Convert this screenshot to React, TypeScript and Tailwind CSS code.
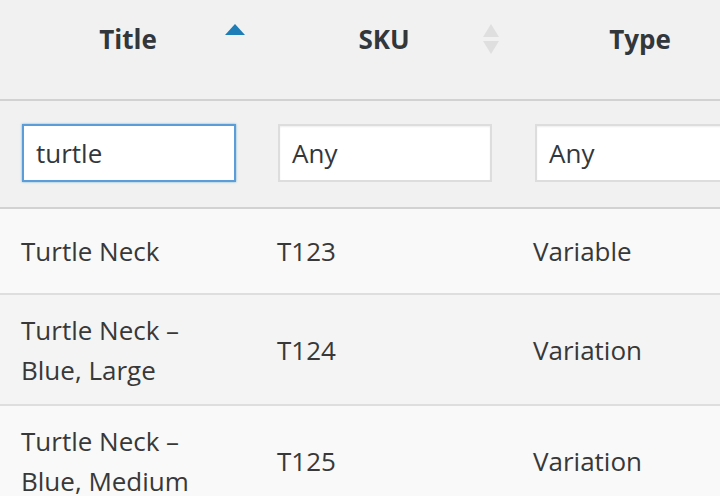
const rows = [
  { title: ["Turtle Neck"], sku: "T123", type: "Variable", h: "h-[86px]", bg: "bg-[#f9f9f9]" },
  { title: ["Turtle Neck –", "Blue, Large"], sku: "T124", type: "Variation", h: "h-[111px]", bg: "bg-[#f4f4f4]" },
  { title: ["Turtle Neck –", "Blue, Medium"], sku: "T125", type: "Variation", h: "h-[111px]", bg: "bg-[#f9f9f9]" },
];

function SortUp() {
  return (
    <svg width="20" height="12" viewBox="0 0 20 12" className="absolute right-[11px] top-[24px]">
      <path d="M10 0 L20 11 L0 11 Z" fill="#1e7cb6" />
    </svg>
  );
}

function SortBoth() {
  return (
    <svg width="16" height="31" viewBox="0 0 16 31" className="absolute right-[13px] top-[24px]">
      <path d="M8 0 L16 13 L0 13 Z" fill="#dfdfdf" />
      <path d="M0 17 L16 17 L8 30 Z" fill="#dfdfdf" />
    </svg>
  );
}

export default function App() {
  return (
    <div
      className="h-[496px] w-[720px] overflow-hidden bg-[#f1f1f1] text-[26px] text-[#383838]"
      style={{ fontFamily: '"Open Sans", "Noto Sans", sans-serif' }}
    >
      <div className="w-[768px]">
        <div className="grid h-[101px] grid-cols-[256px_256px_256px] border-b-2 border-[#d2d2d2] bg-[#f1f1f1] font-bold text-[#32373c]">
          <div className="relative flex items-center justify-center pb-[20px]">
            Title
            <SortUp />
          </div>
          <div className="relative flex items-center justify-center pb-[20px]">
            SKU
            <SortBoth />
          </div>
          <div className="relative flex items-center justify-center pb-[20px]">Type</div>
        </div>

        <div className="grid h-[108px] grid-cols-[256px_256px_256px] border-b-2 border-[#d2d2d2] bg-[#f1f1f1]">
          <div className="flex items-center pb-[2px] pl-[22px]">
            <div className="flex h-[58px] w-[214px] items-center border-2 border-[#5b9dd9] bg-white px-[12px] text-[#32373c] shadow-[0_0_2px_rgba(30,140,190,0.6)]">
              turtle
            </div>
          </div>
          <div className="flex items-center pb-[2px] pl-[22px]">
            <div className="flex h-[58px] w-[214px] items-center border-2 border-[#dddddd] bg-white px-[12px] text-[#32373c] shadow-[inset_0_1px_2px_rgba(0,0,0,0.07)]">
              Any
            </div>
          </div>
          <div className="flex items-center pb-[2px] pl-[23px]">
            <div className="flex h-[58px] w-[214px] items-center border-2 border-[#dddddd] bg-white px-[12px] text-[#32373c] shadow-[inset_0_1px_2px_rgba(0,0,0,0.07)]">
              Any
            </div>
          </div>
        </div>

        {rows.map((r) => (
          <div
            key={r.sku}
            className={`grid grid-cols-[256px_256px_256px] border-b-2 border-[#dedede] leading-[40px] ${r.h} ${r.bg}`}
          >
            <div className="flex flex-col justify-center pl-[21px]">
              {r.title.map((t) => (
                <span key={t}>{t}</span>
              ))}
            </div>
            <div className="flex items-center pl-[21px]">{r.sku}</div>
            <div className="flex items-center pl-[21px]">{r.type}</div>
          </div>
        ))}
      </div>
    </div>
  );
}
